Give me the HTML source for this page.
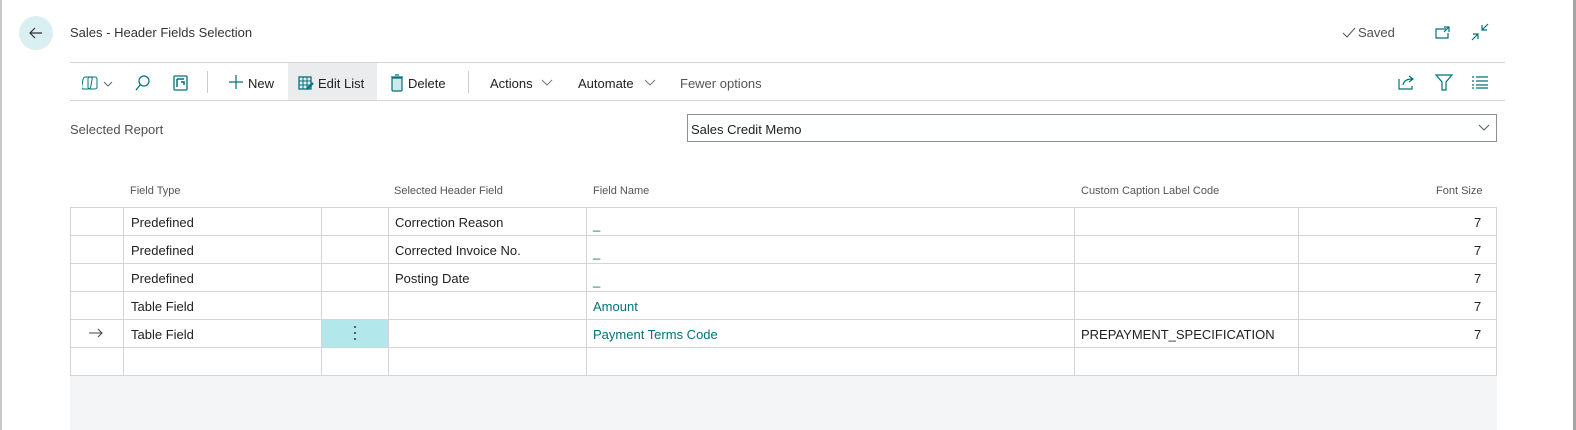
<!DOCTYPE html>
<html><head><style>
*{margin:0;padding:0;box-sizing:border-box}
body{width:1576px;height:430px;overflow:hidden;background:#fff;font-family:"Liberation Sans",sans-serif;color:#212121;position:relative}
.a{position:absolute}
.t{font-size:13px;white-space:nowrap}
.teal{color:#00727a}
.cell{position:absolute;font-size:13px;white-space:nowrap}
</style></head><body>
<div class="a" style="left:0;top:0;width:2px;height:430px;background:#c8c8c8"></div>
<div class="a" style="left:1573px;top:0;width:3px;height:430px;background:#a6a6a6"></div>
<div class="a" style="left:19px;top:16px;width:34px;height:34px;border-radius:50%;background:#d9eff2"></div>
<svg class="a" style="left:26px;top:23px" width="20" height="20" viewBox="0 0 20 20"><path d="M16 10H4M9 5L4 10l5 5" stroke="#333" stroke-width="1.2" fill="none"/></svg>
<div class="a t" style="left:70px;top:25px;color:#333">Sales - Header Fields Selection</div>
<svg class="a" style="left:1342px;top:27px" width="14" height="12" viewBox="0 0 14 12"><path d="M1 6l4 4 8-9" stroke="#555" fill="none"/></svg>
<div class="a t" style="left:1358px;top:25px;color:#505050">Saved</div>
<svg class="a" style="left:1434px;top:24px" width="18" height="16" viewBox="0 0 18 16"><path d="M12 5H2v9h12V9M10 3h5v5M15 3l-5 5" stroke="#00727a" stroke-width="1.2" fill="none"/></svg>
<svg class="a" style="left:1470px;top:22px" width="20" height="20" viewBox="0 0 20 20"><path d="M18 2l-6 6M12 3v5h5M2 18l6-6M3 12h5v5" stroke="#00727a" stroke-width="1.2" fill="none"/></svg>
<div class="a" style="left:70px;top:62px;width:1435px;height:1px;background:#d4d4d8"></div>
<div class="a" style="left:70px;top:100px;width:1435px;height:1px;background:#d4d4d8"></div>
<svg class="a" style="left:82px;top:74px" width="36" height="18" viewBox="0 0 36 18"><rect x="2" y="3" width="9" height="12" rx="2" stroke="#00727a" fill="none" transform="skewX(-10)"/><rect x="6" y="3" width="9" height="12" rx="2" stroke="#00727a" fill="none"/><path d="M22 8l4 4 4-4" stroke="#666" fill="none"/></svg>
<svg class="a" style="left:134px;top:74px" width="18" height="18" viewBox="0 0 18 18"><circle cx="10" cy="7" r="5" stroke="#00727a" fill="none" stroke-width="1.2"/><path d="M6.5 10.5L2 16" stroke="#00727a" stroke-width="1.3"/></svg>
<svg class="a" style="left:172px;top:74px" width="18" height="18" viewBox="0 0 18 18"><rect x="2" y="2" width="13" height="14" rx="1" stroke="#00727a" fill="none" stroke-width="1.3"/><path d="M5 5h7M5 5v8M9 8h3v3" stroke="#00727a" stroke-width="1.5" fill="none"/></svg>
<div class="a" style="left:207px;top:71px;width:1px;height:22px;background:#ccc"></div>
<svg class="a" style="left:228px;top:74px" width="16" height="16" viewBox="0 0 16 16"><path d="M8 1v14M1 8h14" stroke="#00727a" stroke-width="1.2"/></svg>
<div class="a t" style="left:248px;top:76px">New</div>
<div class="a" style="left:288px;top:63px;width:89px;height:37px;background:#ebecee"></div>
<svg class="a" style="left:298px;top:75px" width="16" height="16" viewBox="0 0 16 16"><rect x="1" y="2" width="12" height="12" stroke="#00727a" fill="none" stroke-width="1.3"/><path d="M1 6h12M1 10h12M5 2v12M9 2v12" stroke="#00727a"/><path d="M9 14l6-6" stroke="#00727a" stroke-width="2.2"/></svg>
<div class="a t" style="left:318px;top:76px">Edit List</div>
<svg class="a" style="left:390px;top:74px" width="14" height="18" viewBox="0 0 14 18"><rect x="2" y="4" width="10" height="13" rx="1" stroke="#00727a" fill="#cde9ec" stroke-width="1.2"/><path d="M1 3h12M5 1h4" stroke="#00727a" stroke-width="1.2"/></svg>
<div class="a t" style="left:408px;top:76px">Delete</div>
<div class="a" style="left:468px;top:71px;width:1px;height:22px;background:#ccc"></div>
<div class="a t" style="left:490px;top:76px">Actions</div>
<svg class="a" style="left:541px;top:79px" width="12" height="8" viewBox="0 0 12 8"><path d="M1 1l5 5 5-5" stroke="#777" fill="none"/></svg>
<div class="a t" style="left:578px;top:76px">Automate</div>
<svg class="a" style="left:644px;top:79px" width="12" height="8" viewBox="0 0 12 8"><path d="M1 1l5 5 5-5" stroke="#777" fill="none"/></svg>
<div class="a t" style="left:680px;top:76px;color:#555">Fewer options</div>
<svg class="a" style="left:1398px;top:74px" width="18" height="16" viewBox="0 0 18 16"><path d="M1 5v10h13v-3M5 11c1-5 5-6 9-6M11 2l4 3-4 3" stroke="#00727a" stroke-width="1.2" fill="none"/></svg>
<svg class="a" style="left:1435px;top:74px" width="18" height="17" viewBox="0 0 18 17"><path d="M1 1h16l-6 7v8h-4V8z" stroke="#00727a" stroke-width="1.2" fill="none"/></svg>
<svg class="a" style="left:1472px;top:76px" width="16" height="13" viewBox="0 0 16 13"><path d="M0 1h2M4 1h12M0 5h2M4 5h12M0 9h2M4 9h12M0 12h2M4 12h12" stroke="#00727a" stroke-width="1.2"/></svg>
<div class="a t" style="left:70px;top:122px;color:#505050">Selected Report</div>
<div class="a" style="left:687px;top:114px;width:810px;height:28px;border:1px solid #8a8f98"></div>
<div class="a t" style="left:691px;top:122px">Sales Credit Memo</div>
<svg class="a" style="left:1478px;top:124px" width="12" height="8" viewBox="0 0 12 8"><path d="M1 1l5 5 5-5" stroke="#555" fill="none"/></svg>

<div class="a" style="font-size:11px;left:130px;top:185px;color:#555">Field Type</div>
<div class="a" style="font-size:11px;left:394px;top:185px;color:#555">Selected Header Field</div>
<div class="a" style="font-size:11px;left:593px;top:185px;color:#555">Field Name</div>
<div class="a" style="font-size:11px;left:1081px;top:185px;color:#555">Custom Caption Label Code</div>
<div class="a" style="font-size:11px;left:1436px;top:185px;color:#555">Font Size</div>

<div class="a" style="left:70px;top:375px;width:1427px;height:55px;background:#f4f5f7"></div>
<div class="a" style="left:322px;top:320px;width:66px;height:27px;background:#b2e8ec"></div>
<svg class="a" style="left:0;top:0" width="1576" height="430"><g stroke="#d4d4d8" stroke-width="1">
<path d="M70 207.5H1497M70 235.5H1497M70 263.5H1497M70 291.5H1497M70 319.5H1497M70 347.5H1497M70 375.5H1497"/>
<path d="M70.5 207V376M123.5 207V376M321.5 207V376M388.5 207V376M586.5 207V376M1074.5 207V376M1298.5 207V376M1496.5 207V376"/></g>
<path d="M89 333H102M98 329l4 4-4 4" stroke="#444" fill="none"/>
<circle cx="355" cy="327" r="1" fill="#333"/><circle cx="355" cy="333" r="1" fill="#333"/><circle cx="355" cy="339" r="1" fill="#333"/>
</svg>

<div class="cell" style="left:131px;top:215px">Predefined</div>
<div class="cell" style="left:131px;top:243px">Predefined</div>
<div class="cell" style="left:131px;top:271px">Predefined</div>
<div class="cell" style="left:131px;top:299px">Table Field</div>
<div class="cell" style="left:131px;top:327px">Table Field</div>
<div class="cell" style="left:395px;top:215px">Correction Reason</div>
<div class="cell" style="left:395px;top:243px">Corrected Invoice No.</div>
<div class="cell" style="left:395px;top:271px">Posting Date</div>
<div class="cell teal" style="left:593px;top:217px">_</div>
<div class="cell teal" style="left:593px;top:245px">_</div>
<div class="cell teal" style="left:593px;top:273px">_</div>
<div class="cell teal" style="left:593px;top:299px">Amount</div>
<div class="cell teal" style="left:593px;top:327px">Payment Terms Code</div>
<div class="cell" style="left:1081px;top:327px">PREPAYMENT_SPECIFICATION</div>
<div class="cell" style="left:1474px;top:215px">7</div>
<div class="cell" style="left:1474px;top:243px">7</div>
<div class="cell" style="left:1474px;top:271px">7</div>
<div class="cell" style="left:1474px;top:299px">7</div>
<div class="cell" style="left:1474px;top:327px">7</div>
</body></html>
